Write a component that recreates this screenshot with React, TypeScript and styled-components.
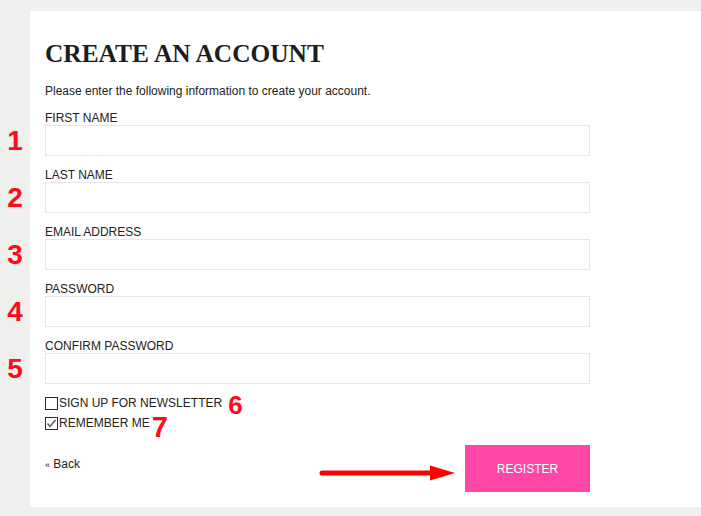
import React from "react";
import styled, { createGlobalStyle } from "styled-components";

const GlobalStyle = createGlobalStyle`
  html, body {
    margin: 0;
    padding: 0;
    background: #eff0ee;
  }
  * { box-sizing: border-box; }
`;

const Page = styled.div`
  padding: 11px 0 9px 30px;
  font-family: "Liberation Sans", Arial, sans-serif;
  color: #222;
`;

const Panel = styled.main`
  background: #fff;
  padding: 27px 0 15px 15px;
  min-height: 496px;
`;

const Title = styled.h1`
  margin: 0;
  font-family: "Liberation Serif", "Times New Roman", serif;
  font-weight: bold;
  font-size: 25.4px;
  line-height: 30px;
  color: #1e1e1e;
`;

const Intro = styled.p`
  margin: 16px 0 11px;
  font-size: 12px;
  line-height: 15px;
`;

const Fields = styled.div`
  display: flex;
  flex-direction: column;
  gap: 11px;
  width: 545px;
`;

const Field = styled.div`
  display: flex;
  flex-direction: column;
`;

const Label = styled.label`
  padding-top: 2px;
  font-size: 12px;
  line-height: 13px;
  text-transform: uppercase;
`;

const InputWrap = styled.div`
  position: relative;
`;

const Input = styled.input`
  display: block;
  width: 545px;
  height: 31px;
  border: 1px solid #e6e6e6;
  background: #fff;
  margin: 0;
  padding: 0 8px;
  font: inherit;
  font-size: 12px;
  outline: none;
`;

const Marker = styled.span<{ $size?: number }>`
  color: #ff0a1a;
  font-family: "Liberation Sans", Arial, sans-serif;
  font-weight: bold;
  font-size: ${(p) => p.$size ?? 28}px;
  line-height: 1;
`;

const SideMarker = styled(Marker)`
  position: absolute;
  left: -45px;
  top: 0;
  width: 30px;
  height: 31px;
  display: flex;
  align-items: center;
  justify-content: center;
`;

const Checks = styled.div`
  margin-top: 9px;
  display: flex;
  flex-direction: column;
`;

const CheckRow = styled.label`
  display: flex;
  align-items: center;
  height: 20px;
  font-size: 12px;
  line-height: 15px;
  text-transform: uppercase;
`;

const Box = styled.span`
  width: 13px;
  height: 13px;
  border: 1px solid #2a2a2a;
  display: inline-flex;
  align-items: center;
  justify-content: center;
  margin-right: 1px;
  flex: none;
`;

const InlineMarker = styled(Marker)<{ $gap: number; $drop: number }>`
  margin-left: ${(p) => p.$gap}px;
  position: relative;
  top: ${(p) => p.$drop}px;
`;

const Actions = styled.div`
  position: relative;
  width: 545px;
  margin-top: 12px;
  display: flex;
  justify-content: space-between;
  align-items: flex-start;
`;

const BackLink = styled.a`
  margin-top: 12px;
  font-size: 12px;
  line-height: 15px;
  color: #222;
  text-decoration: none;
`;

const Quote = styled.span`
  font-size: 9px;
`;

const RegisterButton = styled.button`
  width: 125px;
  height: 47px;
  border: none;
  background: #ff47a8;
  color: #fff;
  font-family: "Liberation Sans", Arial, sans-serif;
  font-size: 12px;
  text-transform: uppercase;
  cursor: pointer;
`;

const Arrow = styled.svg`
  position: absolute;
  left: 273px;
  top: 19px;
`;

const fields = [
  "First Name",
  "Last Name",
  "Email Address",
  "Password",
  "Confirm Password",
];

const Check = ({ checked }: { checked?: boolean }) => (
  <Box>
    {checked && (
      <svg width="11" height="11" viewBox="0 0 11 11">
        <path d="M1.5 5.5 L4 8.5 L9.5 2" fill="none" stroke="#555" strokeWidth="1.4" />
      </svg>
    )}
  </Box>
);

export default function App() {
  return (
    <>
      <GlobalStyle />
      <Page>
        <Panel>
          <Title>CREATE AN ACCOUNT</Title>
          <Intro>Please enter the following information to create your account.</Intro>
          <Fields>
            {fields.map((f, i) => (
              <Field key={f}>
                <Label>{f}</Label>
                <InputWrap>
                  <SideMarker>{i + 1}</SideMarker>
                  <Input type={f.includes("Password") ? "password" : "text"} />
                </InputWrap>
              </Field>
            ))}
          </Fields>
          <Checks>
            <CheckRow>
              <Check />
              Sign up for newsletter
              <InlineMarker $size={26} $gap={6} $drop={2}>6</InlineMarker>
            </CheckRow>
            <CheckRow>
              <Check checked />
              Remember me
              <InlineMarker $size={29} $gap={2} $drop={4}>7</InlineMarker>
            </CheckRow>
          </Checks>
          <Actions>
            <BackLink href="#">
              <Quote>«</Quote> Back
            </BackLink>
            <Arrow width="140" height="20" viewBox="0 0 140 20">
              <line x1="4" y1="9" x2="120" y2="9" stroke="#ff0000" strokeWidth="5" strokeLinecap="round" />
              <polygon points="112,1.5 137,9 112,16.5" fill="#ff0000" />
            </Arrow>
            <RegisterButton>Register</RegisterButton>
          </Actions>
        </Panel>
      </Page>
    </>
  );
}
